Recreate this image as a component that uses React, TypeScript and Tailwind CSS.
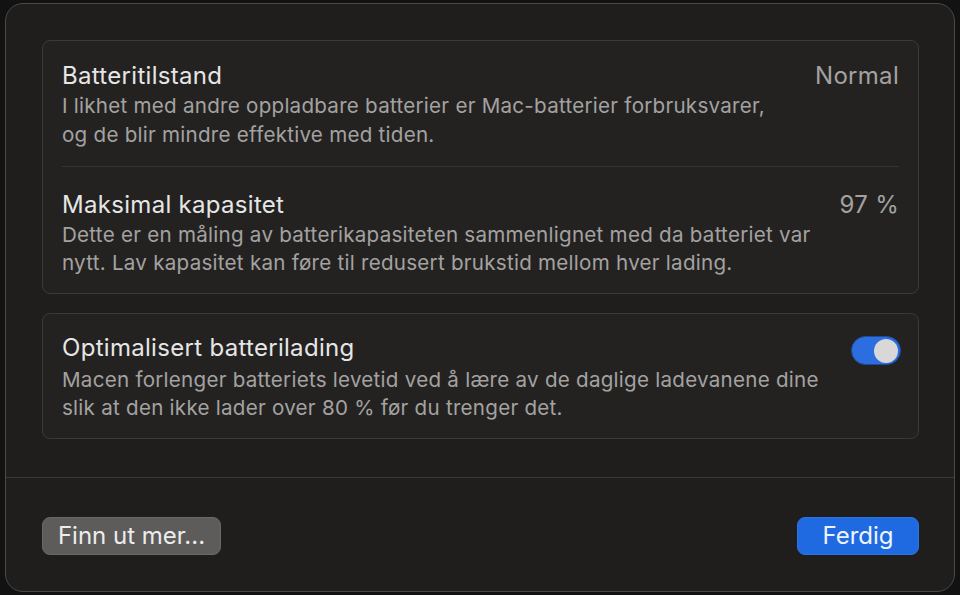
import React from "react";

export default function App() {
  return (
    <div
      className="w-[960px] h-[595px] bg-[#121212] pt-[3px] pl-[5px] overflow-hidden"
      style={{ fontFamily: "Inter, 'Noto Sans', sans-serif" }}
    >
      <div className="h-[589px] w-[950px] rounded-[18px] border border-[#4a4948] bg-[#1f1e1d] flex flex-col">
        <div className="pl-[36px] pr-[35px] pt-[36px] flex flex-col gap-[19px]">
          <div className="rounded-[8px] border border-[#3b3a39] bg-[#232221] px-[19px]">
            <div className="flex justify-between pt-[21px] pb-[17px] border-b border-[#343332]">
              <div>
                <div className="text-[24px] leading-[28px] tracking-[0.3px] text-[#e6e6e6]">Batteritilstand</div>
                <div className="mt-[1px] text-[20.6px] leading-[29px] tracking-[0.25px] text-[#a3a2a1]">
                  I likhet med andre oppladbare batterier er Mac-batterier forbruksvarer,
                  <br />
                  og de blir mindre effektive med tiden.
                </div>
              </div>
              <div className="text-[24px] leading-[28px] tracking-[0.3px] text-[#a3a2a1]">Normal</div>
            </div>
            <div className="flex justify-between pt-[24px] pb-[16px]">
              <div>
                <div className="text-[24px] leading-[28px] tracking-[0.3px] text-[#e6e6e6]">Maksimal kapasitet</div>
                <div className="mt-[2px] text-[20.6px] leading-[28px] tracking-[0.25px] text-[#a3a2a1]">
                  Dette er en måling av batterikapasiteten sammenlignet med da batteriet var
                  <br />
                  nytt. Lav kapasitet kan føre til redusert brukstid mellom hver lading.
                </div>
              </div>
              <div className="text-[24px] leading-[28px] tracking-[0.3px] text-[#a3a2a1]">97 %</div>
            </div>
          </div>
          <div className="rounded-[8px] border border-[#3b3a39] bg-[#232221] pl-[19px] pr-[17px] pt-[20px] pb-[16px] flex justify-between">
            <div>
              <div className="text-[24px] leading-[28px] tracking-[0.3px] text-[#e6e6e6]">Optimalisert batterilading</div>
              <div className="mt-[4px] text-[20.6px] leading-[28px] tracking-[0.25px] text-[#a3a2a1]">
                Macen forlenger batteriets levetid ved å lære av de daglige ladevanene dine
                <br />
                slik at den ikke lader over 80 % før du trenger det.
              </div>
            </div>
            <div className="pt-[2px]">
              <div className="w-[50px] h-[29px] rounded-full bg-[#2c6ee0] border border-[#1e4a9a] flex items-center justify-end pr-[2px]">
                <div className="w-[24px] h-[24px] rounded-full bg-[#d8d8d8]" />
              </div>
            </div>
          </div>
        </div>
        <div className="mt-[38px] border-t border-[#3a3938]" />
        <div className="flex justify-between pl-[36px] pr-[35px] pt-[39px]">
          <div className="h-[38px] w-[179px] rounded-[8px] bg-[#5d5c5b] border border-[#6a6968] flex items-center justify-center text-[24px] text-[#ececec]">
            Finn ut mer...
          </div>
          <div className="h-[38px] w-[122px] rounded-[8px] bg-[#1f6ae0] border border-[#2a74e6] flex items-center justify-center text-[24px] text-[#eef4ff]">
            Ferdig
          </div>
        </div>
      </div>
    </div>
  );
}
